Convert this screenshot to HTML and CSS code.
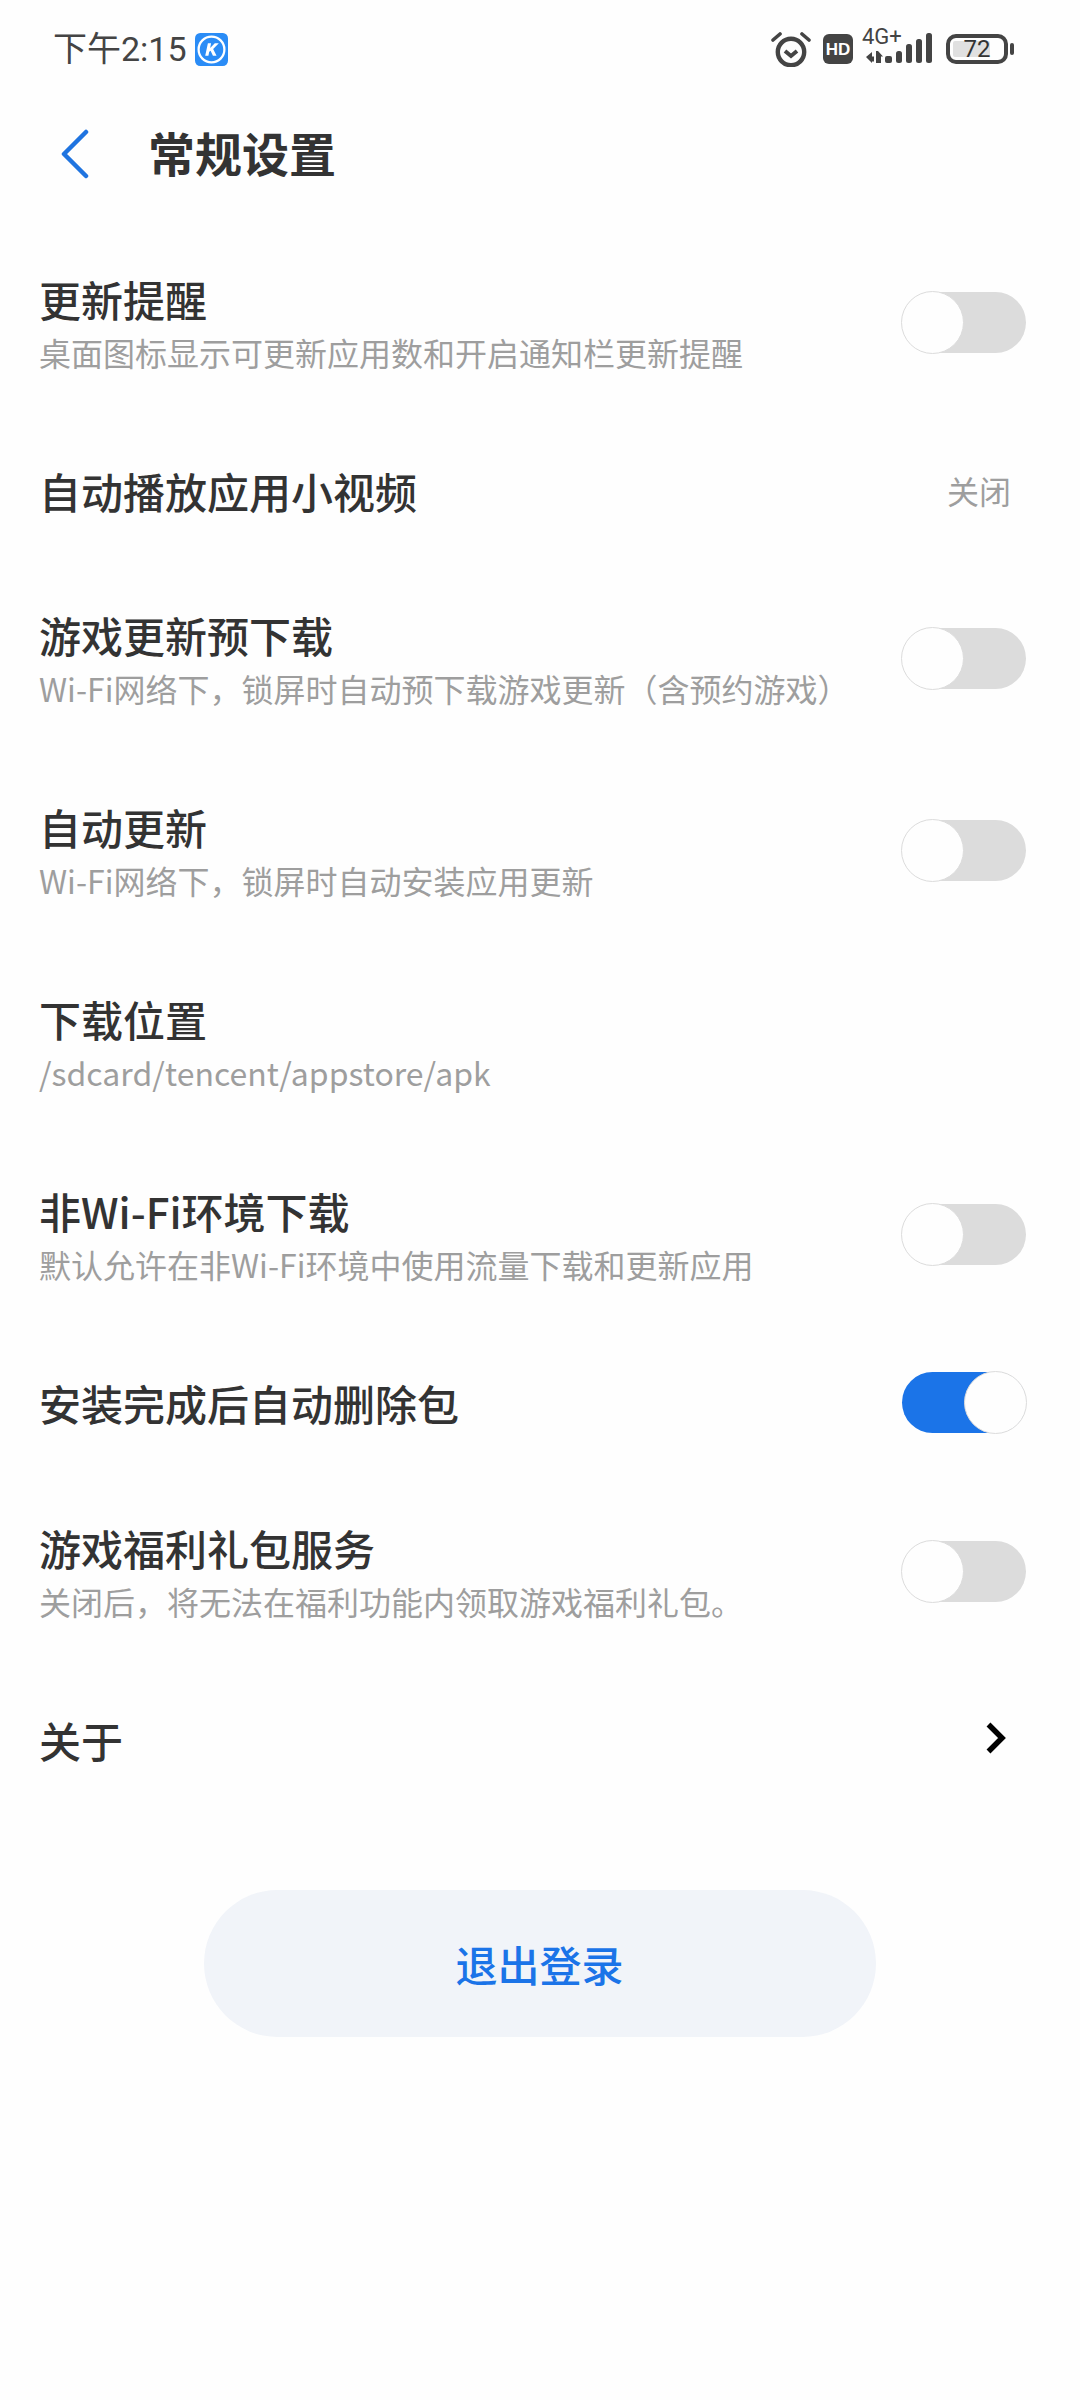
FILE: index.html
```html
<!DOCTYPE html>
<html lang="zh-CN">
<head>
<meta charset="utf-8">
<title>常规设置</title>
<link rel="stylesheet" href="styles.css">
</head>
<body>
<div class="page">
  <div class="statusbar">
    <div class="status-left">
      <span class="clock">下午2:15</span>
      <svg class="k-icon" viewBox="0 0 32 32"><rect width="32" height="32" rx="5" fill="#2a8cf6"/><circle cx="16" cy="16" r="12.500" fill="none" stroke="#fff" stroke-width="2.200"/><path d="M12.500 10h3.100l-.9 4.500 4.500-4.500h3.900l-5.500 5.400 3.300 6.600h-3.500l-2.300-4.800-1.300 1.100-.8 3.700H9.900z" fill="#fff"/></svg>
    </div>
    <div class="status-right">
      <svg class="alarm" viewBox="0 0 40 36"><circle cx="20" cy="21" r="13.200" fill="none" stroke="#444" stroke-width="4.400"/><path d="M14 20l6 5 6-5" fill="none" stroke="#444" stroke-width="4"/><path d="M2 9l7-6M38 9l-7-6" fill="none" stroke="#444" stroke-width="3.600" stroke-linecap="round"/></svg>
      <div class="hd"><span>HD</span></div>
      <div class="net">
        <span class="net-label">4G+</span>
        <svg class="signal" viewBox="0 0 67 30"><path d="M0 24l6-5v4.500h2v5H6V30z M10 18h2l5 5.500h-2V30h-5z" fill="#444"/><rect x="19" y="23" width="7" height="7" rx="2" fill="#444"/><rect x="30" y="18" width="6" height="12" rx="2.500" fill="#444"/><rect x="40" y="11" width="6" height="19" rx="2.500" fill="#444"/><rect x="50" y="6" width="6" height="24" rx="2.500" fill="#444"/><rect x="60" y="0" width="6" height="30" rx="2.500" fill="#444"/></svg>
      </div>
      <div class="battery">
        <div class="battery-body"><div class="battery-fill"></div><span class="battery-num">72</span></div>
        <div class="battery-nub"></div>
      </div>
    </div>
  </div>

  <header class="header">
    <svg class="back" viewBox="0 0 30 50"><path d="M26 3L4 25l22 22" fill="none" stroke="#1f74e0" stroke-width="4.500" stroke-linecap="round" stroke-linejoin="round"/></svg>
    <h1 class="page-title">常规设置</h1>
  </header>

  <main class="list">
    <div class="row two">
      <div class="text"><div class="title">更新提醒</div><div class="sub">桌面图标显示可更新应用数和开启通知栏更新提醒</div></div>
      <div class="switch"><div class="knob"></div></div>
    </div>
    <div class="row one">
      <div class="text"><div class="title">自动播放应用小视频</div></div>
      <span class="value">关闭</span>
    </div>
    <div class="row two">
      <div class="text"><div class="title">游戏更新预下载</div><div class="sub">Wi-Fi网络下，锁屏时自动预下载游戏更新（含预约游戏）</div></div>
      <div class="switch"><div class="knob"></div></div>
    </div>
    <div class="row two">
      <div class="text"><div class="title">自动更新</div><div class="sub">Wi-Fi网络下，锁屏时自动安装应用更新</div></div>
      <div class="switch"><div class="knob"></div></div>
    </div>
    <div class="row two">
      <div class="text"><div class="title">下载位置</div><div class="sub">/sdcard/tencent/appstore/apk</div></div>
    </div>
    <div class="row two">
      <div class="text"><div class="title">非Wi-Fi环境下载</div><div class="sub">默认允许在非Wi-Fi环境中使用流量下载和更新应用</div></div>
      <div class="switch"><div class="knob"></div></div>
    </div>
    <div class="row one tall">
      <div class="text"><div class="title">安装完成后自动删除包</div></div>
      <div class="switch on"><div class="knob"></div></div>
    </div>
    <div class="row two">
      <div class="text"><div class="title">游戏福利礼包服务</div><div class="sub">关闭后，将无法在福利功能内领取游戏福利礼包。</div></div>
      <div class="switch"><div class="knob"></div></div>
    </div>
    <div class="row one">
      <div class="text"><div class="title">关于</div></div>
      <svg class="chevron" viewBox="0 0 20 32"><path d="M2.500 2.500L16 16 2.500 29.500" fill="none" stroke="#000" stroke-width="5.500"/></svg>
    </div>
  </main>

  <div class="logout-wrap"><button class="logout">退出登录</button></div>
</div>
</body>
</html>
```
FILE: styles.css
```css
* { box-sizing: border-box; }
html, body { margin: 0; padding: 0; }
body {
  background: #fefefe;
  font-family: "Noto Sans CJK SC", "Noto Sans", sans-serif;
  color: #333;
}
.page { width: 1080px; height: 2400px; overflow: hidden; }

.statusbar {
  height: 98px;
  display: flex;
  align-items: center;
  justify-content: space-between;
  padding: 0 66px 0 53px;
}
.status-left { display: flex; align-items: center; gap: 8px; }
.clock { font-family: "Roboto", "Noto Sans CJK SC", sans-serif; font-size: 34px; line-height: 40px; color: #444; }
.k-icon { width: 33px; height: 33px; display: block; }
.status-right { display: flex; align-items: center; }
.alarm { width: 40px; height: 36px; display: block; margin-right: 12px; }
.hd {
  width: 30px; height: 30px;
  background: #444; border-radius: 6px;
  display: flex; align-items: center; justify-content: center;
  margin-right: 9px;
}
.hd span { font: 700 17px/1 "Liberation Sans", sans-serif; color: #fff; }
.net { width: 70px; margin-right: 14px; position: relative; height: 36px; }
.net-label { font: 400 22px/22px "Roboto", sans-serif; color: #444; position: absolute; left: 0; top: -5px; }
.signal { width: 67px; height: 30px; position: absolute; left: 4px; top: 2px; display: block; }
.battery { display: flex; align-items: center; gap: 2px; }
.battery-body {
  width: 62px; height: 30px;
  border: 4px solid #444; border-radius: 10px;
  position: relative;
  display: flex; align-items: center; justify-content: center;
}
.battery-fill { position: absolute; left: 3px; top: 3px; bottom: 3px; width: 37px; background: #e0e0e0; border-radius: 2px; }
.battery-num { position: relative; font: 400 24px/1 "Roboto", sans-serif; color: #333; }
.battery-nub { width: 4px; height: 12px; background: #444; border-radius: 2px; }

.header { height: 114px; display: flex; align-items: center; padding: 0 0 3px 60px; }
.back { width: 30px; height: 50px; display: block; flex: none; }
.page-title { margin: 0 0 4px 58px; font-size: 47px; line-height: 64px; font-weight: 700; color: #333; }

.list { margin-top: 20px; }
.row {
  display: flex;
  align-items: center;
  justify-content: space-between;
  padding: 0 54px 0 39px;
}
.row.two { height: 192px; }
.row.two .text { padding-bottom: 3px; }
.row.one { height: 144px; }
.row.one.tall { height: 145px; }
.text { display: flex; flex-direction: column; }
.title { font-size: 42px; line-height: 54px; color: #333; font-weight: 500; margin-top: -2px; }
.sub { font-size: 32px; line-height: 54px; color: #9e9e9e; margin-top: -1px; }
.row.one .title { margin-top: 0; padding-bottom: 11px; }
.value { font-size: 32px; line-height: 44px; color: #9e9e9e; margin: 0 15px 12px 0; }

.switch {
  width: 124px; height: 61px;
  background: #dcdcdc;
  border-radius: 31px;
  position: relative;
  margin-bottom: 12px;
}
.knob {
  position: absolute;
  left: -1px; top: -1px;
  width: 63px; height: 63px;
  border-radius: 50%;
  background: #fefefe;
  border: 1px solid #dcdcdc;
}
.switch.on { background: #1b74e8; }
.switch.on .knob { left: 62px; }
.chevron { width: 20px; height: 32px; display: block; margin-right: 20px; margin-bottom: 14px; }

.logout-wrap { display: flex; justify-content: center; margin-top: 73px; padding-right: 1px; }
.logout {
  width: 672px; height: 147px;
  border: none; border-radius: 74px;
  background: #f1f4f9;
  color: #1b74e8;
  font-family: inherit; font-size: 42px; font-weight: 500;
}
```
